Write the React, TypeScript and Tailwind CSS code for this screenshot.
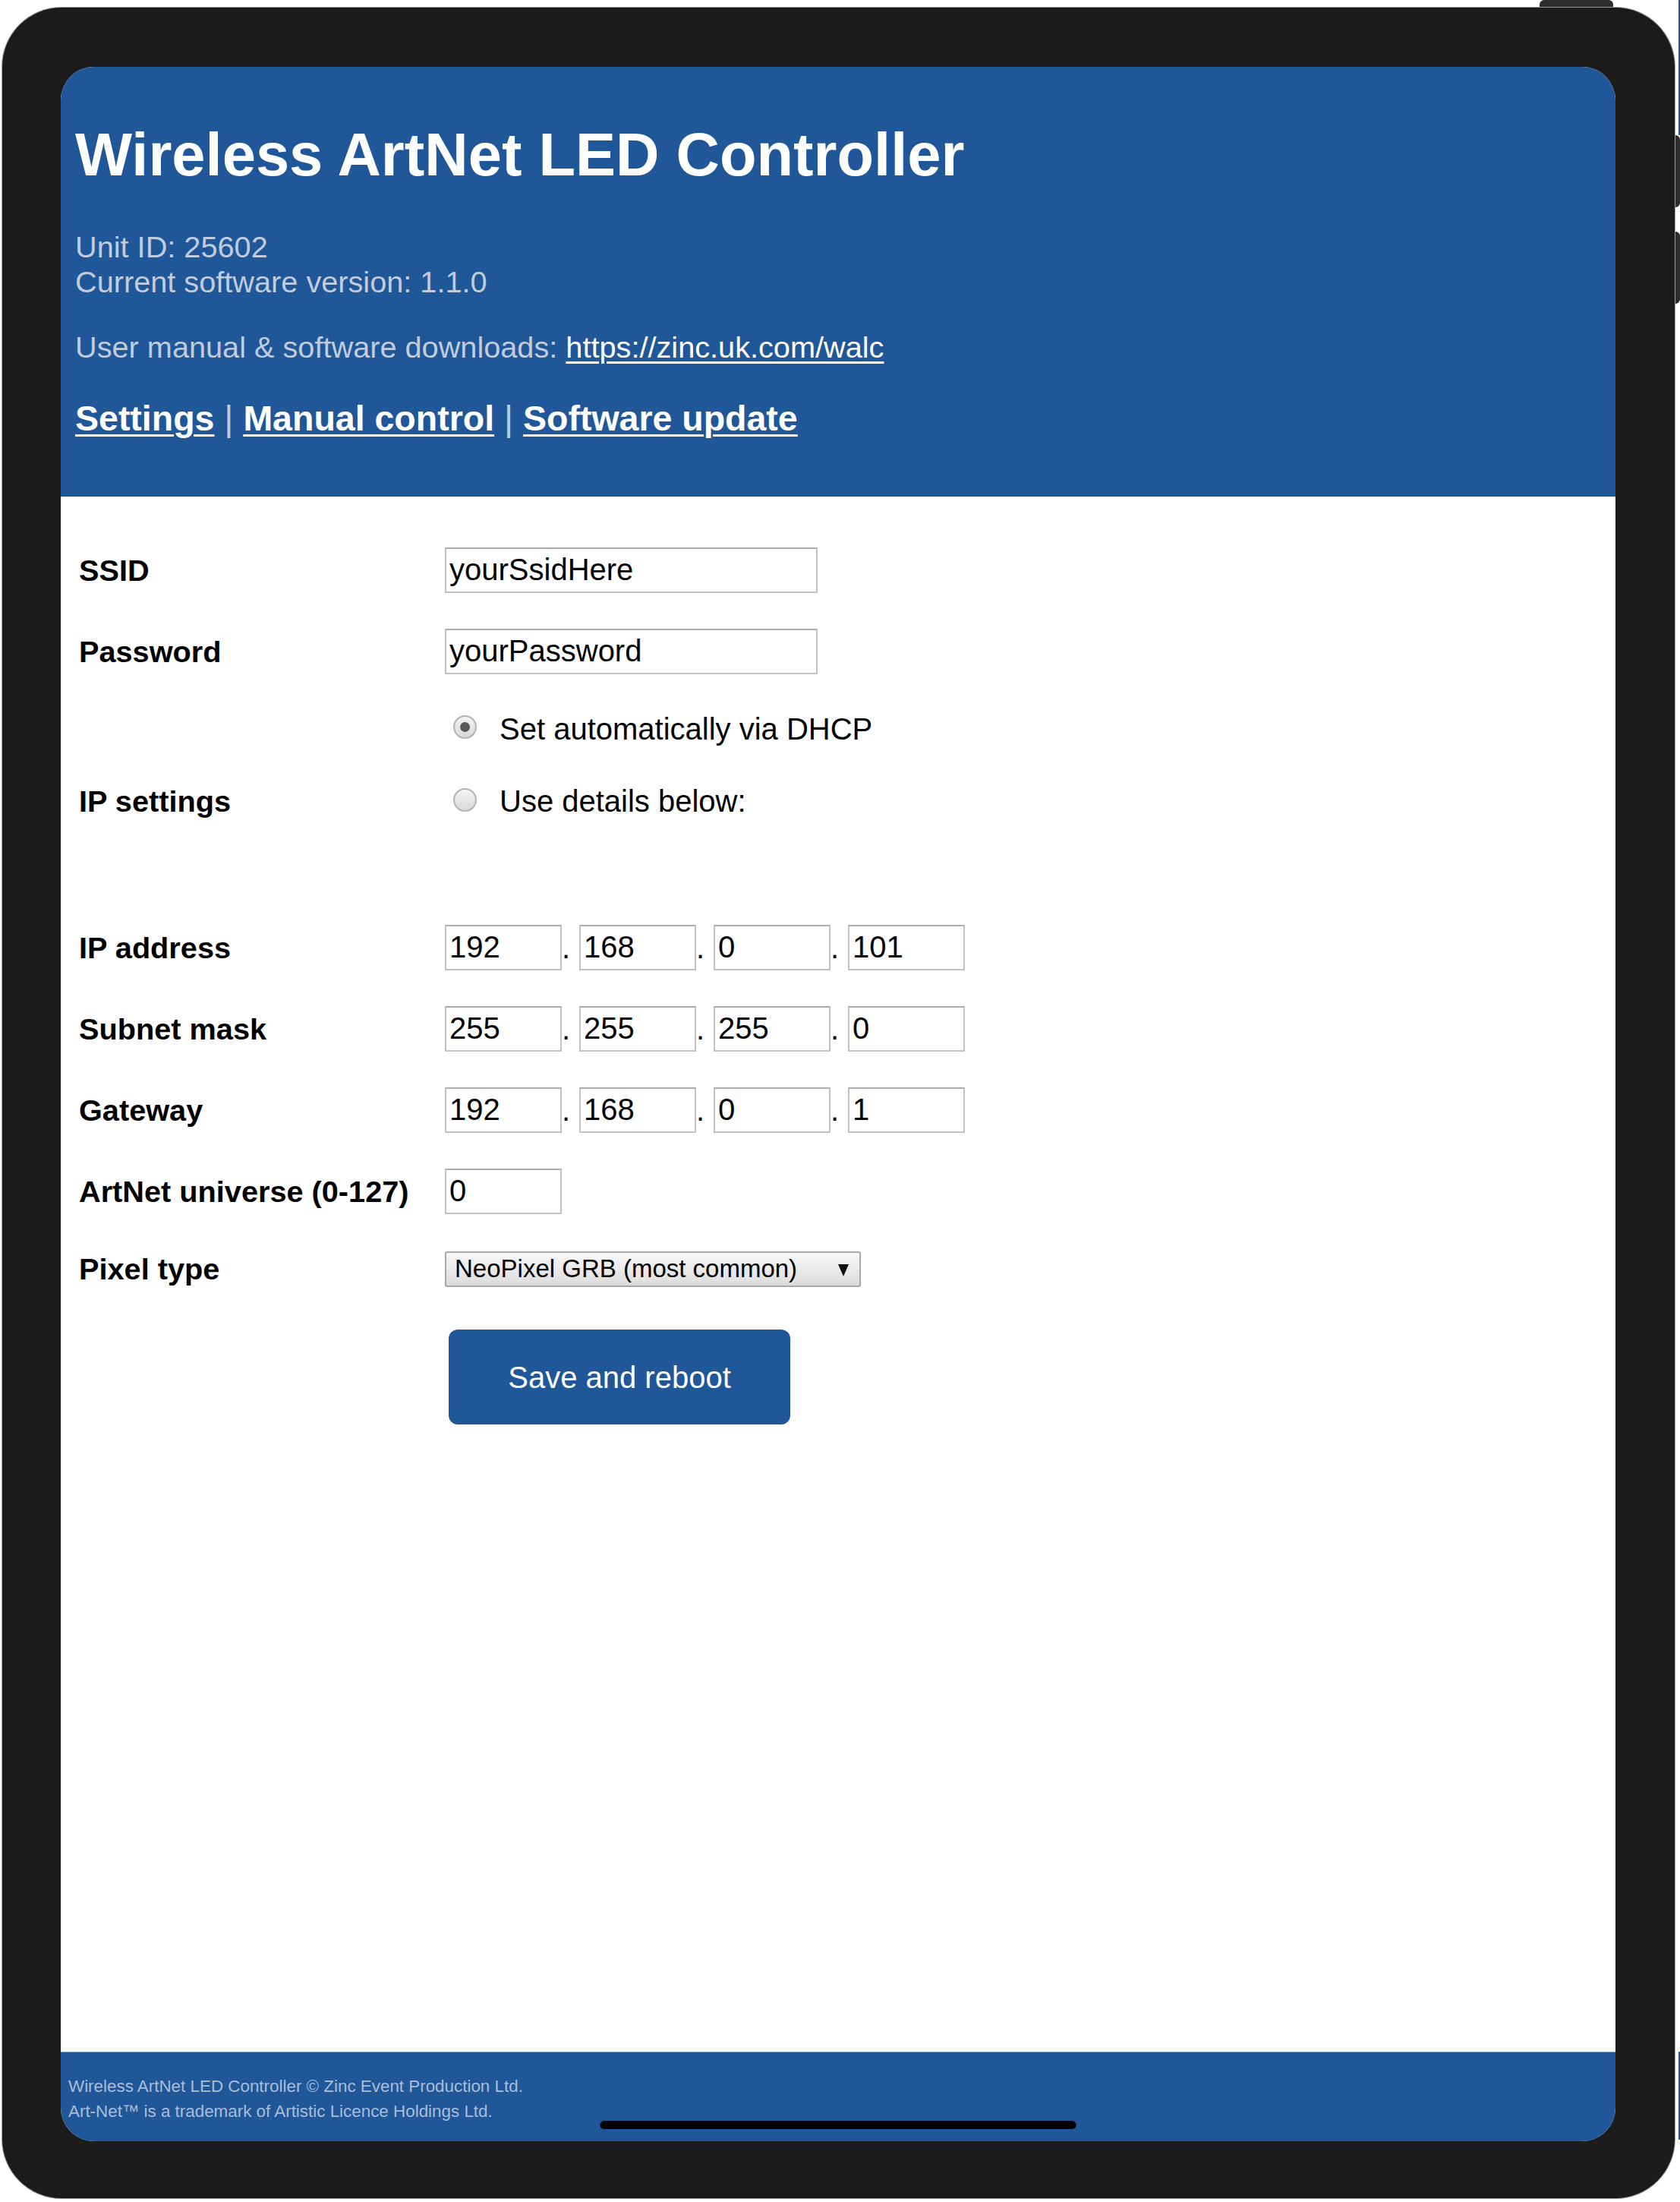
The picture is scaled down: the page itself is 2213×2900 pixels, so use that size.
import React from "react";

function Row({
  label,
  className = "h-[107px]",
  children,
}: {
  label?: string;
  className?: string;
  children?: React.ReactNode;
}) {
  return (
    <div className={`flex items-center ${className}`}>
      <div className="w-[482px] shrink-0 text-[39.7px] font-bold leading-[46px] text-black">
        {label}
      </div>
      <div className="flex items-center">{children}</div>
    </div>
  );
}

function TextBox({ value, wide = false }: { value: string; wide?: boolean }) {
  return (
    <input
      readOnly
      value={value}
      className={`h-[60px] border-2 border-[#c2c2c2] border-t-[#acacac] bg-white px-[4px] text-[40px] leading-[46px] text-black outline-none ${
        wide ? "w-[491px]" : "w-[154px]"
      }`}
    />
  );
}

function Octets({ parts }: { parts: string[] }) {
  return (
    <>
      {parts.map((p, i) => (
        <React.Fragment key={i}>
          <TextBox value={p} />
          {i < parts.length - 1 && (
            <span className="w-[23px] text-[40px] leading-[46px] text-black">.</span>
          )}
        </React.Fragment>
      ))}
    </>
  );
}

function Radio({ checked, text }: { checked?: boolean; text: string }) {
  return (
    <div className="flex items-center">
      <span className="ml-[11px] flex h-[31px] w-[31px] -translate-y-[2px] items-center justify-center rounded-full border-2 border-[#b3b3b3] bg-gradient-to-b from-[#f4f4f4] to-[#d9d9d9]">
        {checked && <span className="h-[13px] w-[13px] rounded-full bg-[#585858]" />}
      </span>
      <span className="ml-[30px] text-[40px] leading-[46px] text-black">{text}</span>
    </div>
  );
}

export default function App() {
  return (
    <div className="relative h-[2900px] w-[2213px] overflow-hidden bg-white font-['Liberation_Sans',Arial,Helvetica,sans-serif]">
      {/* device hardware buttons */}
      <div className="absolute left-[2028px] top-0 h-[14px] w-[97px] rounded-t-[6px] bg-[#2c2c2c]" />
      <div className="absolute left-[2198px] top-[178px] h-[95px] w-[15px] rounded-r-[6px] bg-[#2c2c2c]" />
      <div className="absolute left-[2198px] top-[305px] h-[95px] w-[15px] rounded-r-[6px] bg-[#2c2c2c]" />
      <div className="absolute left-[2211px] top-0 h-[178px] w-[2px] bg-[#1f5799]" />
      <div className="absolute left-[2211px] top-[2702px] h-[116px] w-[2px] bg-[#1f5799]" />

      {/* device frame */}
      <div className="relative z-10 ml-[3px] mt-[10px] h-[2885px] w-[2203px] rounded-[78px] bg-[#1b1b1b] pl-[77px] pt-[78px] shadow-[0_0_0_1px_#9c9c9c]">
        <div className="relative flex h-[2732px] w-[2048px] flex-col overflow-hidden rounded-[44px] bg-white">
          {/* header */}
          <header className="bg-[#1f5799] pb-[76px] pl-[19px] pt-[70px]">
            <h1 className="text-[79.5px] font-bold leading-[92px] text-white">
              Wireless ArtNet LED Controller
            </h1>
            <p className="mt-[52px] text-[39.7px] leading-[46px] text-[#c0ccdd]">
              Unit ID: 25602
              <br />
              Current software version: 1.1.0
            </p>
            <p className="mt-[40px] text-[39.7px] leading-[46px] text-[#c0ccdd]">
              User manual &amp; software downloads:{" "}
              <a href="#" className="text-white underline decoration-[3px] underline-offset-[5px]">
                https://zinc.uk.com/walc
              </a>
            </p>
            <h3 className="mt-[44px] text-[46.5px] font-bold leading-[54px] text-[#c0ccdd]">
              <a href="#" className="text-white underline decoration-[3px] underline-offset-[5px]">
                Settings
              </a>{" "}
              <span className="font-normal">|</span>{" "}
              <a href="#" className="text-white underline decoration-[3px] underline-offset-[5px]">
                Manual control
              </a>{" "}
              <span className="font-normal">|</span>{" "}
              <a href="#" className="text-white underline decoration-[3px] underline-offset-[5px]">
                Software update
              </a>
            </h3>
          </header>

          {/* settings form */}
          <main className="flex-1 pl-[24px] pt-[43px]">
            <Row label="SSID">
              <TextBox value="yourSsidHere" wide />
            </Row>
            <Row label="Password">
              <TextBox value="yourPassword" wide />
            </Row>
            <Row className="h-[97px]">
              <Radio checked text="Set automatically via DHCP" />
            </Row>
            <Row label="IP settings" className="h-[94px]">
              <Radio text="Use details below:" />
            </Row>
            <div className="h-[92px]" />
            <Row label="IP address">
              <Octets parts={["192", "168", "0", "101"]} />
            </Row>
            <Row label="Subnet mask">
              <Octets parts={["255", "255", "255", "0"]} />
            </Row>
            <Row label="Gateway">
              <Octets parts={["192", "168", "0", "1"]} />
            </Row>
            <Row label="ArtNet universe (0-127)">
              <TextBox value="0" />
            </Row>
            <Row label="Pixel type" className="h-[98px]">
              <div className="relative">
                <select
                  defaultValue="grb"
                  className="h-[47px] w-[548px] appearance-none rounded-[3px] border-2 border-[#a8a8a8] bg-gradient-to-b from-[#f8f8f8] to-[#dcdcdc] pl-[11px] text-[33px] leading-[40px] text-black outline-none"
                >
                  <option value="grb">NeoPixel GRB (most common)</option>
                  <option value="rgb">NeoPixel RGB</option>
                  <option value="rgbw">NeoPixel RGBW</option>
                </select>
                <svg
                  className="pointer-events-none absolute right-[16px] top-[17px]"
                  width="14"
                  height="16"
                  viewBox="0 0 14 16"
                >
                  <polygon points="0,0 14,0 7,16" fill="#111" />
                </svg>
              </div>
            </Row>
            <div className="pl-[487px] pt-[31px]">
              <button className="h-[125px] w-[450px] rounded-[12px] bg-[#1f5799] text-[40px] leading-[46px] text-white">
                Save and reboot
              </button>
            </div>
          </main>

          {/* footer */}
          <footer className="h-[118px] border-t border-[#7d9cc4] bg-[#1f5799] pl-[10px] pt-[28px] text-[22.4px] leading-[33px] text-[#a9bdd8]">
            Wireless ArtNet LED Controller © Zinc Event Production Ltd.
            <br />
            Art-Net™ is a trademark of Artistic Licence Holdings Ltd.
          </footer>

          {/* home indicator */}
          <div className="absolute bottom-[16px] left-1/2 h-[11px] w-[627px] -translate-x-1/2 rounded-full bg-black" />
        </div>
      </div>
    </div>
  );
}
